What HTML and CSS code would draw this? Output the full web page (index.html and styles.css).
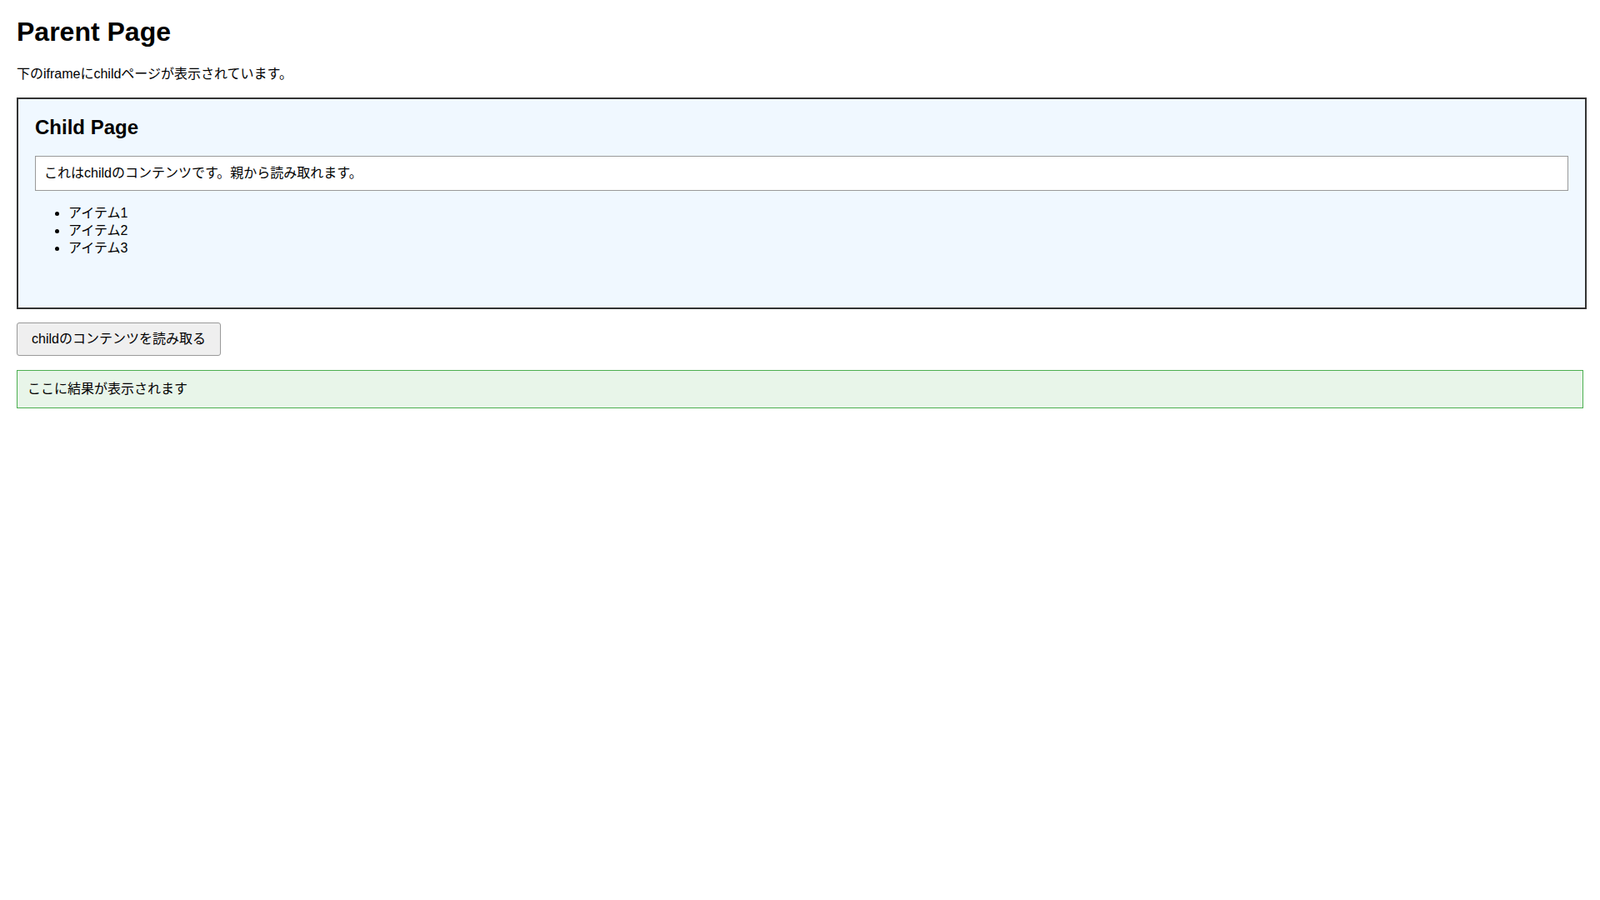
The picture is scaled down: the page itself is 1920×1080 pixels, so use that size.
FILE: index.html
```html
<!DOCTYPE html>
<html lang="ja">
<head>
  <meta charset="UTF-8" />
  <meta name="viewport" content="width=device-width, initial-scale=1.0" />
  <title>Parent Page</title>
  <link rel="stylesheet" href="styles.css">
</head>
<body>
  <h1>Parent Page</h1>
  <p>下のiframeにchildページが表示されています。</p>
  <div class="frame" id="childFrame">
    <div class="child-page">
      <h2>Child Page</h2>
      <div class="content-box" id="content">これはchildのコンテンツです。親から読み取れます。</div>
      <ul>
        <li>アイテム1</li>
        <li>アイテム2</li>
        <li>アイテム3</li>
      </ul>
    </div>
  </div>
  <button class="read-btn" onclick="readChild()">childのコンテンツを読み取る</button>
  <div class="result" id="result">ここに結果が表示されます</div>
  <script>
    function readChild() {
      const text = document.getElementById('content').textContent;
      document.getElementById('result').textContent = '読み取り結果: ' + text;
    }
  </script>
</body>
</html>
```
FILE: styles.css
```css
body {
  margin: 0;
  padding: 20px;
  font-family: 'Liberation Sans', 'Noto Sans CJK JP', sans-serif;
  font-size: 16px;
  line-height: 21px;
  color: #000;
  background: #fff;
}
h1 {
  font-size: 32px;
  line-height: 37px;
  margin: 0 0 21px;
}
p {
  margin: 0 0 18px;
}
.frame {
  width: 100%;
  height: 250px;
  border: 2px solid #333;
  overflow: hidden;
  margin-bottom: 16px;
}
.child-page {
  height: 100%;
  box-sizing: border-box;
  padding: 20px;
  background: #f0f8ff;
}
.child-page h2 {
  font-size: 24px;
  line-height: 28px;
  margin: 0 0 20px;
}
.content-box {
  background: #fff;
  border: 1px solid #999;
  padding: 10px;
  line-height: 20px;
}
.child-page ul {
  margin: 16px 0;
  padding-left: 40px;
}
.read-btn {
  display: block;
  font-family: inherit;
  font-size: 16px;
  line-height: 22px;
  padding: 8px 17px;
  background: #efefef;
  border: 1px solid #999;
  border-radius: 3px;
  color: #000;
  cursor: pointer;
}
.result {
  margin-top: 17px;
  padding: 12px;
  line-height: 20px;
  background: #e8f5e9;
  border: 1px solid #4caf50;
}
```
